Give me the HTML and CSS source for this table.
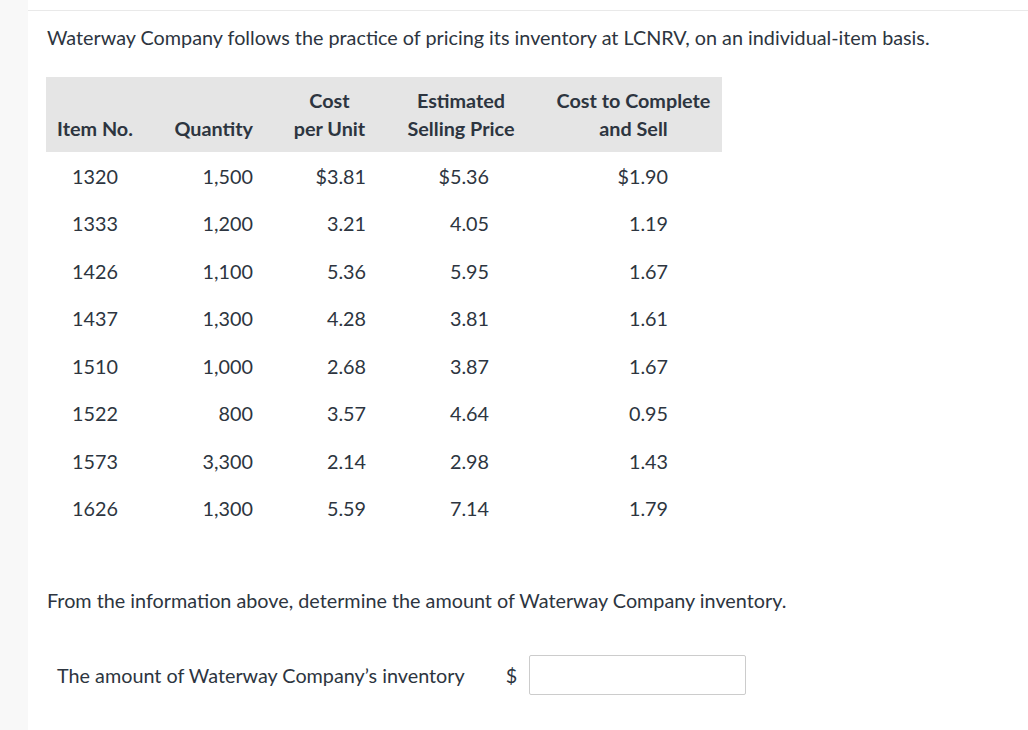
FILE: index.html
```html
<!DOCTYPE html>
<html>
<head>
<meta charset="utf-8">
<link rel="stylesheet" href="styles.css">
</head>
<body>
<div class="page">
  <div class="side"></div>
  <div class="main">
    <p class="intro">Waterway Company follows the practice of pricing its inventory at LCNRV, on an individual-item basis.</p>
    <table class="inv">
      <thead>
        <tr>
          <th class="c-item">Item No.</th>
          <th class="c-qty">Quantity</th>
          <th class="c-cost">Cost<br>per Unit</th>
          <th class="c-esp">Estimated<br>Selling Price</th>
          <th class="c-ctc">Cost to Complete<br>and Sell</th>
        </tr>
      </thead>
      <tbody>
        <tr><td class="c-item">1320</td><td class="c-qty">1,500</td><td class="c-cost">$3.81</td><td class="c-esp">$5.36</td><td class="c-ctc">$1.90</td></tr>
        <tr><td class="c-item">1333</td><td class="c-qty">1,200</td><td class="c-cost">3.21</td><td class="c-esp">4.05</td><td class="c-ctc">1.19</td></tr>
        <tr><td class="c-item">1426</td><td class="c-qty">1,100</td><td class="c-cost">5.36</td><td class="c-esp">5.95</td><td class="c-ctc">1.67</td></tr>
        <tr><td class="c-item">1437</td><td class="c-qty">1,300</td><td class="c-cost">4.28</td><td class="c-esp">3.81</td><td class="c-ctc">1.61</td></tr>
        <tr><td class="c-item">1510</td><td class="c-qty">1,000</td><td class="c-cost">2.68</td><td class="c-esp">3.87</td><td class="c-ctc">1.67</td></tr>
        <tr><td class="c-item">1522</td><td class="c-qty">800</td><td class="c-cost">3.57</td><td class="c-esp">4.64</td><td class="c-ctc">0.95</td></tr>
        <tr><td class="c-item">1573</td><td class="c-qty">3,300</td><td class="c-cost">2.14</td><td class="c-esp">2.98</td><td class="c-ctc">1.43</td></tr>
        <tr><td class="c-item">1626</td><td class="c-qty">1,300</td><td class="c-cost">5.59</td><td class="c-esp">7.14</td><td class="c-ctc">1.79</td></tr>
      </tbody>
    </table>
    <p class="question">From the information above, determine the amount of Waterway Company inventory.</p>
    <div class="answer">
      <span class="answer-label">The amount of Waterway Company’s inventory</span>
      <span class="dollar">$</span>
      <input class="answer-input" type="text" aria-label="inventory amount">
    </div>
  </div>
</div>
</body>
</html>
```

FILE: styles.css
```css
html, body {
  margin: 0;
  padding: 0;
  background: #ffffff;
}
body {
  font-family: Lato, "Open Sans", sans-serif;
  color: #2d3540;
  font-size: 19.8px;
}
.page {
  display: flex;
  min-height: 730px;
}
.side {
  width: 28px;
  flex: none;
  background: #f8f8f8;
}
.main {
  flex: 1;
  margin-top: 10px;
  border-top: 1px solid #e9e9e9;
  padding: 0 0 0 18px;
}
.intro {
  margin: 14px 0 0 1px;
  line-height: 24px;
}
.inv {
  border-collapse: collapse;
  table-layout: fixed;
  width: 676px;
  margin-top: 28px;
  font-size: 19.8px;
}
.inv th,
.inv td {
  box-sizing: border-box;
  line-height: 28px;
}
.inv th {
  background: #e5e5e5;
  font-weight: bold;
  padding: 9px 20px 10px 20px;
  vertical-align: bottom;
  text-align: center;
}
.inv td {
  padding: 9.78px 20px;
}
.inv .c-item { width: 107px; padding-left: 11px; text-align: center; }
.inv .c-qty { width: 120px; }
.inv .c-cost { width: 113px; }
.inv .c-esp { width: 150px; }
.inv .c-ctc { width: 186px; padding-right: 11px; }
.inv td.c-qty,
.inv td.c-cost,
.inv td.c-esp,
.inv td.c-ctc { text-align: right; }
.inv th.c-qty { text-align: right; }
.inv td.c-esp { padding-right: 47px; }
.inv td.c-ctc { padding-right: 54px; }
.question {
  margin: 56px 0 0 1px;
  line-height: 24px;
}
.answer {
  display: flex;
  align-items: center;
  margin-top: 43px;
  padding-left: 11px;
}
.answer-label {
  line-height: 24px;
}
.dollar {
  margin-left: 41px;
  line-height: 24px;
}
.answer-input {
  margin-left: 12px;
  width: 217px;
  height: 40px;
  box-sizing: border-box;
  border: 1px solid #cccccc;
  border-radius: 2px;
  font-family: inherit;
  font-size: 17px;
  padding: 0 8px;
}
```
